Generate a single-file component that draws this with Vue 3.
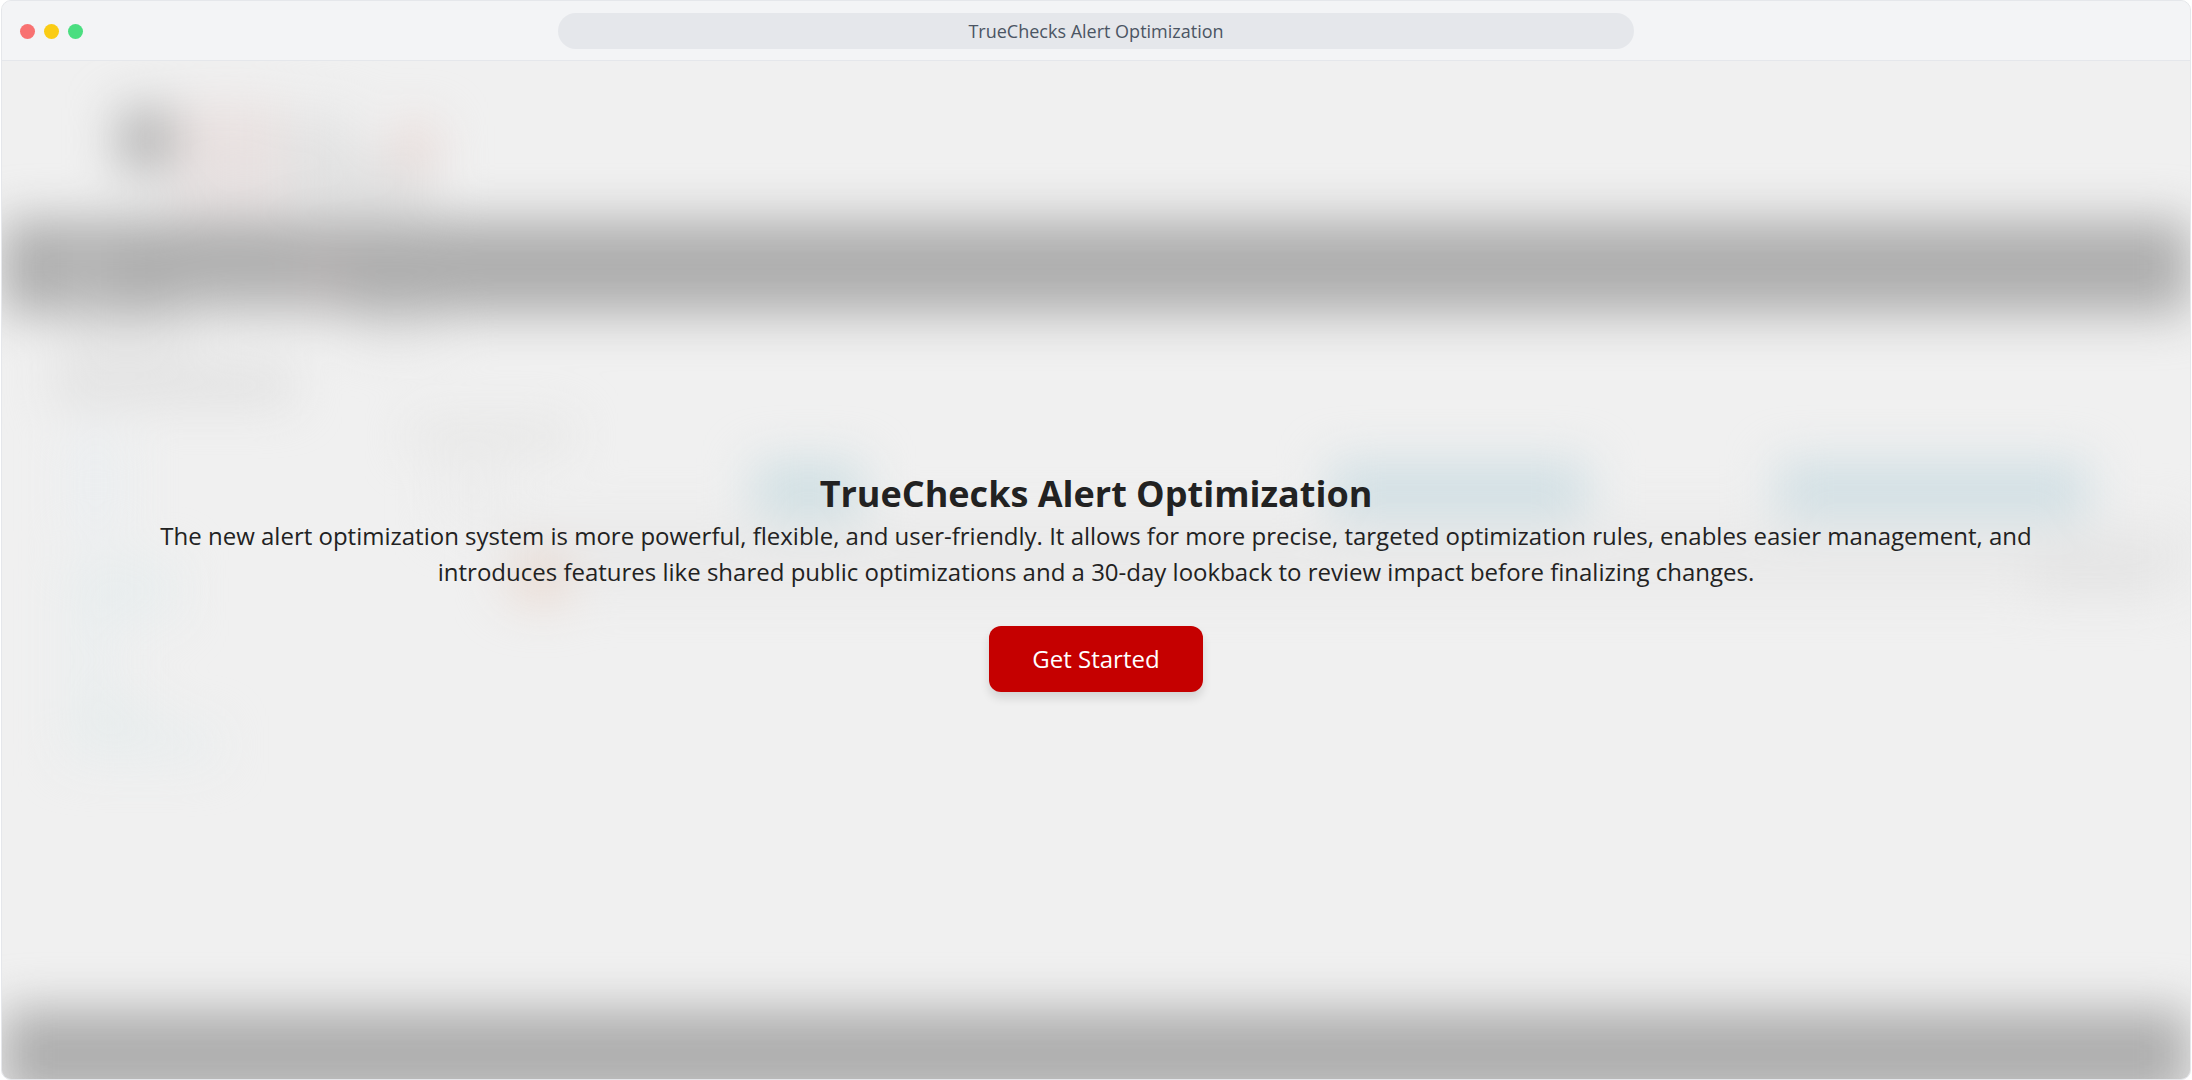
<script setup>
const title = 'TrueChecks Alert Optimization'

// Shapes of the page preview that sits out of focus behind the intro
const shapes = [
  // logo and site name
  { x: 116, y: 108, w: 56, h: 64, fill: '#b6b6b6' },
  { x: 172, y: 104, w: 110, h: 50, fill: '#e9e1e0' },
  { x: 172, y: 154, w: 116, h: 60, fill: '#e7e1e1' },
  { x: 284, y: 112, w: 70, h: 46, fill: '#e4e4e4' },
  { x: 290, y: 158, w: 140, h: 50, fill: '#e0e0e0' },
  { x: 392, y: 124, w: 44, h: 44, fill: '#e9dad7' },
  // navigation bar
  { x: 0, y: 220, w: 2190, h: 94, fill: '#aeaeae' },
  { x: 68, y: 245, w: 34, h: 60, fill: '#bcbcbc' },
  { x: 170, y: 284, w: 170, h: 30, fill: '#bcbcbc' },
  { x: 305, y: 250, w: 30, h: 50, fill: '#bab4b4' },
  // breadcrumb and page heading
  { x: 60, y: 318, w: 130, h: 36, fill: '#e5e5e5' },
  { x: 350, y: 318, w: 90, h: 24, fill: '#e4e4e4' },
  { x: 50, y: 368, w: 240, h: 34, fill: '#dfdfdf' },
  // side links
  { x: 64, y: 430, w: 60, h: 110, fill: '#ebeef0' },
  { x: 64, y: 560, w: 110, h: 60, fill: '#e8edee' },
  { x: 64, y: 620, w: 50, h: 80, fill: '#eaeeef' },
  { x: 64, y: 700, w: 90, h: 30, fill: '#e7ecec' },
  { x: 64, y: 730, w: 150, h: 30, fill: '#e8edee' },
  // table
  { x: 410, y: 422, w: 160, h: 28, fill: '#e5e5e4' },
  { x: 440, y: 465, w: 60, h: 60, fill: '#ececec' },
  { x: 500, y: 520, w: 1690, h: 70, fill: '#e9e9e9' },
  { x: 2030, y: 550, w: 130, h: 44, fill: '#e3e3e3' },
  { x: 512, y: 554, w: 54, h: 48, fill: '#ead9d0' },
  { x: 752, y: 462, w: 110, h: 56, fill: '#cfdfe3' },
  { x: 1328, y: 462, w: 260, h: 56, fill: '#d0dfe4' },
  { x: 1776, y: 462, w: 312, h: 56, fill: '#d0dfe4' },
  // footer
  { x: 0, y: 1009, w: 2190, h: 92, fill: '#aeaeae' },
]
</script>

<template>
  <div class="window">
    <header class="bar">
      <div class="dots">
        <span class="dot red"></span>
        <span class="dot yellow"></span>
        <span class="dot green"></span>
      </div>
      <div class="address">{{ title }}</div>
    </header>
    <main class="stage">
      <svg class="backdrop" viewBox="0 61 2190 1018" preserveAspectRatio="none" aria-hidden="true">
        <rect
          v-for="(s, i) in shapes"
          :key="i"
          :x="s.x"
          :y="s.y"
          :width="s.w"
          :height="s.h"
          :fill="s.fill"
        />
      </svg>
      <section class="intro">
        <h1>{{ title }}</h1>
        <p>
          The new alert optimization system is more powerful, flexible, and user-friendly. It allows
          for more precise, targeted optimization rules, enables easier management, and introduces
          features like shared public optimizations and a 30-day lookback to review impact before
          finalizing changes.
        </p>
        <button type="button">Get Started</button>
      </section>
    </main>
  </div>
</template>

<style>
body {
  background: #fff;
}
</style>

<style scoped>
.window {
  box-sizing: border-box;
  display: flex;
  flex-direction: column;
  min-height: 100vh;
  margin: 0 1px;
  border: 1px solid #e5e7eb;
  border-radius: 10px;
  overflow: hidden;
  background: #f0f0f0;
  font-family: "Open Sans", "Noto Sans", sans-serif;
  color: #222;
}

.bar {
  display: grid;
  grid-template-columns: 1fr 50% 1fr;
  align-items: center;
  padding: 12px 18px 11px;
  border-bottom: 1px solid #e5e7eb;
  background: #f3f4f6;
}

.dots {
  display: flex;
  gap: 9px;
}

.dot {
  width: 15px;
  height: 15px;
  border-radius: 50%;
}

.red {
  background: #f87171;
}

.yellow {
  background: #facc15;
}

.green {
  background: #4ade80;
}

.address {
  border-radius: 18px;
  background: #e5e7eb;
  color: #4b5563;
  font-size: 18px;
  line-height: 36px;
  text-align: center;
}

.stage {
  position: relative;
  flex: 1;
  display: flex;
  overflow: hidden;
}

.backdrop {
  position: absolute;
  inset: 0;
  width: 100%;
  height: 100%;
  overflow: visible;
  filter: blur(24px);
}

.intro {
  position: relative;
  flex: 1;
  display: flex;
  flex-direction: column;
  align-items: center;
  justify-content: center;
  padding: 22px 120px 0;
  text-align: center;
}

h1 {
  margin: 0;
  font-size: 36px;
  font-weight: 700;
  line-height: 48px;
}

p {
  margin: 0 0 36px;
  font-size: 24px;
  line-height: 36px;
}

button {
  padding: 0 43px;
  border: 0;
  border-radius: 12px;
  background: #c50000;
  box-shadow: 0 6px 10px rgba(0, 0, 0, 0.12);
  color: #fff;
  font-family: inherit;
  font-size: 24px;
  font-weight: 500;
  line-height: 66px;
  cursor: pointer;
}
</style>
